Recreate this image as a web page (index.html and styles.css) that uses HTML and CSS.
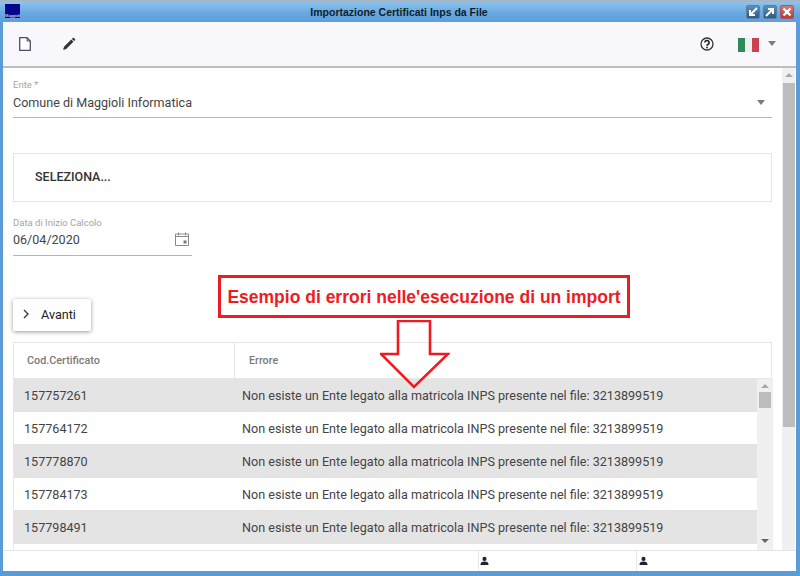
FILE: index.html
```html
<!DOCTYPE html>
<html lang="it">
<head>
<meta charset="utf-8">
<title>Importazione Certificati Inps da File</title>
<link rel="stylesheet" href="styles.css">
</head>
<body>
<div class="window">
  <header class="titlebar">
    <div class="logo"><span>Maggioli</span></div>
    <div class="title">Importazione Certificati Inps da File</div>
    <div class="winbtns">
      <button class="winbtn"><svg viewBox="0 0 12 12" width="12" height="12"><path d="M10 2 4 8M3 4v5h5" fill="none" stroke="#fff" stroke-width="2"/></svg></button>
      <button class="winbtn"><svg viewBox="0 0 12 12" width="12" height="12"><path d="M2 10 8 4M4 3h5v5" fill="none" stroke="#fff" stroke-width="2"/></svg></button>
      <button class="winbtn close"><svg viewBox="0 0 12 12" width="12" height="12"><path d="M2.5 2.5l7 7M9.5 2.5l-7 7" fill="none" stroke="#fff" stroke-width="2.4"/></svg></button>
    </div>
  </header>
  <div class="frame">
    <div class="toolbar">
      <svg class="tool-doc" viewBox="0 0 12 14" width="12" height="14"><path d="M.7.7h7.300l3.300 3.300v9.300H.7z" fill="#fff" stroke="#5a4a6a" stroke-width="1.300"/><path d="M8 .7v3.300h3.300" fill="none" stroke="#5a4a6a" stroke-width="1"/></svg>
      <svg class="tool-pen" viewBox="0 0 16 16" width="14" height="14"><path d="M1.500 14.500l.8-3.300 8.300-8.300 2.500 2.500-8.300 8.300z" fill="#333"/><path d="M11.300 2.200l1-1a1 1 0 0 1 1.400 0l1.100 1.100a1 1 0 0 1 0 1.400l-1 1z" fill="#333"/><path d="M1.500 14.500l.5-2 1.500 1.500z" fill="#a33"/></svg>
      <div class="toolbar-space"></div>
      <svg class="tool-help" viewBox="0 0 14 14" width="14" height="14"><circle cx="7" cy="7" r="6" fill="none" stroke="#333" stroke-width="1.300"/><path d="M4.900 5.500a2.100 2 0 1 1 3.200 1.700c-.8.5-1.100.8-1.100 1.600" fill="none" stroke="#222" stroke-width="1.600"/><rect x="6.200" y="9.700" width="1.600" height="1.600" fill="#222"/></svg>
      <div class="flag"><i class="fg"></i><i class="fw"></i><i class="fr"></i></div>
      <div class="caret tool-caret"></div>
    </div>
    <div class="body">
      <main class="content">
        <div class="field field-ente">
          <label class="flabel">Ente *</label>
          <div class="fvalue"><span>Comune di Maggioli Informatica</span><div class="caret"></div></div>
        </div>
        <div class="upload">SELEZIONA...</div>
        <div class="field field-date">
          <label class="flabel">Data di Inizio Calcolo</label>
          <div class="fvalue"><span>06/04/2020</span>
            <svg class="cal" viewBox="0 0 14 14" width="14" height="14"><path d="M.5 2h13v11.500H.5z" fill="none" stroke="#8a8a8a"/><path d="M.5 4.500h13" stroke="#8a8a8a"/><path d="M3.500 .5v3M10.500 .5v3" stroke="#8a8a8a"/><rect x="8.500" y="8.500" width="3" height="3" fill="#777"/></svg>
          </div>
        </div>
        <button class="btn-next"><svg viewBox="0 0 8 10" width="8" height="10"><path d="M2 1l4 4-4 4" fill="none" stroke="#333" stroke-width="1.300"/></svg><span>Avanti</span></button>
        <div class="grid">
          <div class="grid-head">
            <div class="hcell c1">Cod.Certificato</div>
            <div class="hcell c2">Errore</div>
          </div>
          <div class="grid-body">
            <div class="rows">
              <div class="row odd"><div class="c1">157757261</div><div class="c2">Non esiste un Ente legato alla matricola INPS presente nel file: 3213899519</div></div>
              <div class="row"><div class="c1">157764172</div><div class="c2">Non esiste un Ente legato alla matricola INPS presente nel file: 3213899519</div></div>
              <div class="row odd"><div class="c1">157778870</div><div class="c2">Non esiste un Ente legato alla matricola INPS presente nel file: 3213899519</div></div>
              <div class="row"><div class="c1">157784173</div><div class="c2">Non esiste un Ente legato alla matricola INPS presente nel file: 3213899519</div></div>
              <div class="row odd"><div class="c1">157798491</div><div class="c2">Non esiste un Ente legato alla matricola INPS presente nel file: 3213899519</div></div>
            </div>
            <div class="sb sb-inner"><div class="arrow up"></div><div class="thumb"></div><div class="sb-fill"></div><div class="arrow down"></div></div>
          </div>
        </div>
      </main>
      <div class="sb sb-outer"><div class="arrow up"></div><div class="thumb"></div></div>
    </div>
    <footer class="status">
      <div class="st st1"></div>
      <div class="st st2"><svg viewBox="0 0 10 10" width="9" height="10"><circle cx="5" cy="2.700" r="2.300" fill="#223"/><path d="M.5 9.500c0-3 1.500-4 4.500-4s4.500 1 4.500 4z" fill="#223"/></svg></div>
      <div class="st st3"><svg viewBox="0 0 10 10" width="9" height="10"><circle cx="5" cy="2.700" r="2.300" fill="#223"/><path d="M.5 9.500c0-3 1.500-4 4.500-4s4.500 1 4.500 4z" fill="#223"/></svg></div>
    </footer>
  </div>
  <div class="note">Esempio di errori nelle'esecuzione di un import</div>
  <svg class="note-arrow" viewBox="0 0 70 70" width="70" height="70"><path d="M18 1h32v33h18L34 67 1 34h17z" fill="none" stroke="#ed1c24" stroke-width="2.600"/></svg>
</div>
</body>
</html>
```

FILE: styles.css
```css
* { box-sizing: border-box; }
html, body { margin: 0; padding: 0; }
body { width: 800px; height: 576px; overflow: hidden; font-family: Roboto, "Liberation Sans", sans-serif; color: #333; background: #fff; }
.window { position: relative; width: 800px; height: 576px; display: flex; flex-direction: column; background: #5b9bd8; border-top: 2px solid #a9b6c2; }
.titlebar { height: 20px; flex: none; display: flex; align-items: center; position: relative; background: linear-gradient(#8cc3ee, #69a8e0 55%, #5e9edb); }
.logo { position: absolute; left: 5px; top: 2px; width: 15px; height: 14px; background: #06068c; display: flex; align-items: flex-end; justify-content: center; }
.logo span { font: 4px "Liberation Sans", sans-serif; color: #fff; line-height: 5px; white-space: nowrap; }
.title { flex: 1; text-align: center; font: bold 10.500px "Liberation Sans", sans-serif; color: #0e1e2e; padding-right: 2px; }
.winbtns { position: absolute; right: 6px; top: 3px; display: flex; gap: 3px; }
.winbtn { width: 14px; height: 14px; padding: 0; border: 1px solid #5d7f9d; border-radius: 2px; background: linear-gradient(#5f8fb8, #2c5a82); display: flex; align-items: center; justify-content: center; }
.winbtn.close { background: linear-gradient(#d97a70, #b03c36); border-color: #a56; }
.frame { flex: 1; min-height: 0; margin: 0 4px 5px 3px; background: #fff; display: flex; flex-direction: column; }
.toolbar { height: 46px; flex: none; display: flex; align-items: center; background: #f8f8fc; border-bottom: 2px solid #bdbdbd; padding-bottom: 1px; }
.tool-doc { margin-left: 16px; }
.tool-pen { margin-left: 31px; }
.toolbar-space { flex: 1; }
.tool-help { margin-right: 24px; }
.flag { width: 21px; height: 14px; display: flex; filter: blur(.4px); margin-top: 3px; }
.flag i { flex: 1; }
.fg { background: #2e8b57; }
.fw { background: #eee; }
.fr { background: #c8434f; }
.caret { width: 0; height: 0; border-left: 4px solid transparent; border-right: 4px solid transparent; border-top: 5px solid #7d7d7d; }
.tool-caret { margin: 0 20px 0 9px; }
.body { flex: 1; min-height: 0; display: flex; }
.content { flex: 1; min-width: 0; padding: 11px 10px 0 10px; overflow: hidden; }
.field { display: flex; flex-direction: column; }
.flabel { font-size: 9.500px; line-height: 12px; color: #a5a5a5; }
.fvalue { display: flex; align-items: center; justify-content: space-between; font-size: 12.550px; color: #444; height: 27px; border-bottom: 1.500px solid #b5b5b5; padding: 0 7px 3px 0; }
.upload { margin-top: 35px; height: 49px; border: 1px solid #e6e6e6; display: flex; align-items: center; padding: 0 0 2px 21px; font-size: 12.500px; font-weight: 500; color: #333; }
.field-date { width: 179px; margin-top: 15px; }
.field-date .fvalue { padding: 0 3px 6px 0; }
.btn-next { margin-top: 43px; width: 78px; height: 32px; border: 0; border-radius: 2px; background: #fff; box-shadow: 0 1px 4px rgba(0,0,0,.4); display: flex; align-items: center; padding: 0 0 2px 9px; gap: 11px; font: 400 12.600px Roboto, sans-serif; color: #222; }
.grid { margin-top: 11px; border: 1px solid #e6e6e6; border-bottom: 0; }
.grid-head { height: 36px; display: flex; border-bottom: 1px solid #e6e6e6; }
.hcell { display: flex; align-items: center; font-size: 10.800px; font-weight: 500; color: #7a7a7a; }
.hcell.c1 { width: 221px; padding-left: 13px; border-right: 1px solid #e6e6e6; }
.hcell.c2 { padding-left: 14px; }
.grid-body { display: flex; height: 171px; }
.rows { width: 743px; flex: none; }
.row { height: 33px; display: flex; align-items: center; font-size: 12.600px; color: #444; background: #fff; border-bottom: 1px solid #e2e2e2; }
.row.odd { background: #e4e4e4; }
.row .c1 { width: 228px; padding-left: 10px; }
.sb { background: #f0f0f0; display: flex; flex-direction: column; align-items: center; }
.sb-inner { flex: 1; padding: 5px 2px 7px; }
.sb-outer { width: 13px; flex: none; margin: 0 1px 0 0; padding-top: 5px; }
.sb-fill { flex: 1; }
.thumb { background: #bcbcbc; width: 12px; }
.sb-inner .thumb { height: 16px; margin-top: 4px; }
.sb-outer .thumb { height: 344px; margin-top: 6px; width: 12px; }
.arrow { width: 0; height: 0; border-left: 4px solid transparent; border-right: 4px solid transparent; }
.arrow.up { border-bottom: 4px solid #a8a8a8; }
.arrow.down { border-top: 4px solid #666; }
.status { height: 21px; flex: none; display: flex; border-top: 1.500px solid #e4e4e4; background: #fff; }
.st { display: flex; align-items: center; padding-left: 1px; border-left: 1px solid #e8e8e8; }
.st1 { width: 475px; border-left: 0; }
.st2 { width: 158px; }
.st3 { flex: 1; padding-left: 2px; }
.note { position: absolute; left: 218px; top: 273px; width: 412px; height: 43px; border: 3px solid #ed1c24; background: #fff; color: #ed1c24; font: bold 17.500px "Liberation Sans", sans-serif; display: flex; align-items: center; justify-content: center; white-space: nowrap; padding-top: 1px; }
.note-arrow { position: absolute; left: 380px; top: 318px; }
```
